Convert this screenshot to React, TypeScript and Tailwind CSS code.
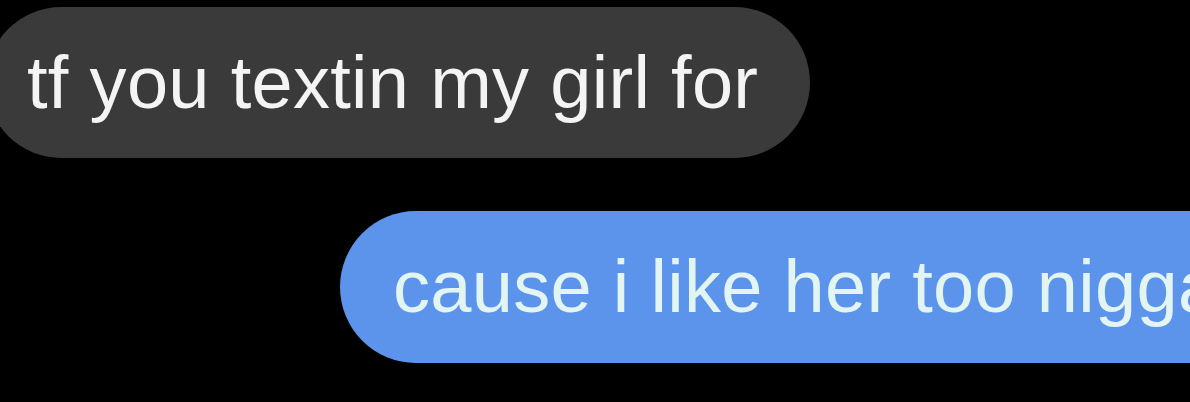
import React from "react";

const App: React.FC = () => {
  return (
    <div
      className="w-[1190px] h-[402px] bg-black overflow-hidden flex flex-col pt-[7px]"
      style={{ fontFamily: '"Liberation Sans", Arial, sans-serif' }}
    >
      {/* received */}
      <div className="ml-[-14px] self-start h-[151px] rounded-full bg-[#3a3a3a] flex items-center pl-[41px] pr-[52px]">
        <span className="text-[74px] leading-none tracking-[0.3px] text-[#f4f4f4] whitespace-nowrap">
          tf you textin my girl for
        </span>
      </div>

      {/* sent */}
      <div className="mt-[53px] ml-[340px] w-[960px] shrink-0 h-[152px] rounded-full bg-[#5b94ea] flex items-center pl-[53px]">
        <span className="text-[74px] leading-none tracking-[0.3px] text-[#e2f5f3] whitespace-nowrap">
          cause i like her too nigga
        </span>
      </div>
    </div>
  );
};

export default App;
